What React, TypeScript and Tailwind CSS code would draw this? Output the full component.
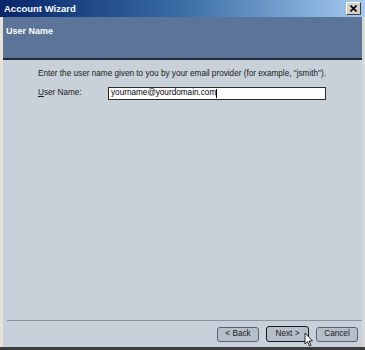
export default function App() {
  return (
    <div
      className="w-[365px] h-[350px] flex flex-col overflow-hidden bg-[#c8d0d9] text-black"
      style={{ fontFamily: '"Liberation Sans", Arial, sans-serif' }}
    >
      {/* Title bar */}
      <div className="h-[17px] shrink-0 flex items-center justify-between pl-[4px] pr-[4px] bg-gradient-to-r from-[#0a246a] via-[#3a6ea5] to-[#a6caf0]">
        <span className="text-white font-bold text-[9.5px] leading-none">Account Wizard</span>
        <button className="w-[15px] h-[13px] flex items-center justify-center bg-[#d4d0c8] border border-t-white border-l-white border-r-[#404040] border-b-[#404040]">
          <svg width="7" height="7" viewBox="0 0 7 7">
            <path d="M0.5 0.5 L6.5 6.5 M6.5 0.5 L0.5 6.5" stroke="#000" strokeWidth="1.6" />
          </svg>
        </button>
      </div>

      <div className="flex flex-1 min-h-0">
        <div className="w-[3px] shrink-0 bg-[#e6e2d6]" />
        <div className="flex-1 flex flex-col min-w-0">
          {/* Header */}
          <div className="h-[43px] shrink-0 bg-[#5b7497] border-b-2 border-[#1f2c3c] px-[3px] pt-[10px] leading-none">
            <span className="block text-white font-bold text-[9px] leading-none">User Name</span>
          </div>

          {/* Content */}
          <div className="flex-1 flex flex-col pl-[35px] pr-[10px] pt-[9px]">
            <p className="text-[8.2px] leading-[10px] text-[#1a1a1a]">
              Enter the user name given to you by your email provider (for example, "jsmith").
            </p>
            <div className="flex items-center mt-[8px]">
              <label className="w-[70px] text-[8.2px] text-[#1a1a1a]">
                <span className="underline">U</span>ser Name:
              </label>
              <div className="w-[218px] h-[13px] bg-white border border-[#2a2a2a] flex items-center pl-[2px] text-[8.2px] text-black">
                yourname@yourdomain.com<span className="w-px h-[9px] bg-black" />
              </div>
            </div>
          </div>

          {/* Footer */}
          <div className="h-[27px] shrink-0 border-t border-t-[#8a96a4] ml-[4px] flex items-center justify-end gap-[7px] pr-[4px]">
            <button className="w-[42px] h-[15px] rounded-[3px] border border-[#5a6470] bg-[#b4bfcb] text-[8.2px] text-[#1a1a1a]">
              &lt; Back
            </button>
            <button className="relative w-[43px] h-[16px] rounded-[3px] border-[1.5px] border-[#1a1a1a] bg-[#b4bfcb] text-[8.2px] text-[#1a1a1a]">
              Next &gt;
              <svg className="absolute left-[37px] top-[5px]" width="10" height="15" viewBox="0 0 10 15">
                <path d="M1 1 L1 12 L3.5 9.5 L5.5 14 L7 13.3 L5 9 L8.5 9 Z" fill="#fff" stroke="#000" strokeWidth="0.8" />
              </svg>
            </button>
            <button className="w-[42px] h-[15px] rounded-[3px] border border-[#5a6470] bg-[#b4bfcb] text-[8.2px] text-[#1a1a1a]">
              Cancel
            </button>
          </div>
        </div>
        <div className="w-[3px] shrink-0 bg-[#d8d8d8]" />
      </div>
      <div className="h-[3px] shrink-0 bg-[#3c3c3c]" />
    </div>
  );
}
